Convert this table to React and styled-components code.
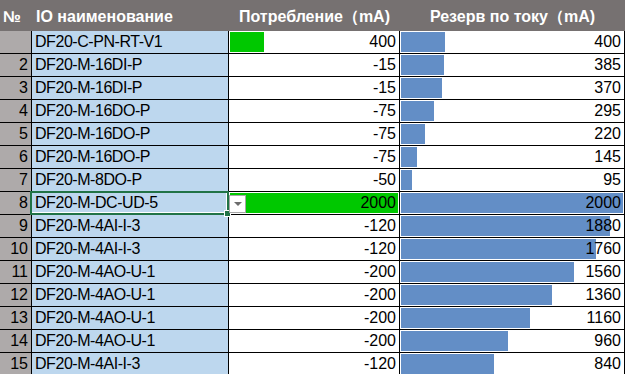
import styled, { createGlobalStyle } from "styled-components";

const GlobalStyle = createGlobalStyle`
  html, body {
    margin: 0;
    padding: 0;
    background: #fff;
    overflow: hidden;
  }
  body {
    font-family: "Liberation Sans Narrow", "Liberation Sans", Arial, sans-serif;
  }
`;

const rows = [
  { n: "", name: "DF20-C-PN-RT-V1", use: 400, res: 400 },
  { n: 2, name: "DF20-M-16DI-P", use: -15, res: 385 },
  { n: 3, name: "DF20-M-16DI-P", use: -15, res: 370 },
  { n: 4, name: "DF20-M-16DO-P", use: -75, res: 295 },
  { n: 5, name: "DF20-M-16DO-P", use: -75, res: 220 },
  { n: 6, name: "DF20-M-16DO-P", use: -75, res: 145 },
  { n: 7, name: "DF20-M-8DO-P", use: -50, res: 95 },
  { n: 8, name: "DF20-M-DC-UD-5", use: 2000, res: 2000, selected: true },
  { n: 9, name: "DF20-M-4AI-I-3", use: -120, res: 1880 },
  { n: 10, name: "DF20-M-4AI-I-3", use: -120, res: 1760 },
  { n: 11, name: "DF20-M-4AO-U-1", use: -200, res: 1560 },
  { n: 12, name: "DF20-M-4AO-U-1", use: -200, res: 1360 },
  { n: 13, name: "DF20-M-4AO-U-1", use: -200, res: 1160 },
  { n: 14, name: "DF20-M-4AO-U-1", use: -200, res: 960 },
  { n: 15, name: "DF20-M-4AI-I-3", use: -120, res: 840 },
];

const MAX = 2000;

const Sheet = styled.div`
  display: grid;
  grid-template-columns: 32px 197px 171px 225px;
  grid-template-rows: 31px;
  grid-auto-rows: 23px;
  width: 625px;
`;

const HeadCell = styled.div`
  background: #767171;
  color: #fff;
  font-weight: 700;
  font-size: 16px;
  line-height: 1;
  display: flex;
  align-items: flex-end;
  justify-content: ${(p) => (p.$center ? "center" : "flex-start")};
  padding: 0 0 6px ${(p) => p.$indent || "0"};
  white-space: nowrap;
  box-sizing: border-box;
`;

const Cell = styled.div`
  position: relative;
  box-sizing: border-box;
  border-right: 1px solid #000;
  border-bottom: 1px solid #000;
  background: ${(p) => p.$bg || "#fff"};
  color: #000;
  font-size: 16px;
  line-height: 1;
  letter-spacing: ${(p) => (p.$tight ? "-0.45px" : "0")};
  display: flex;
  align-items: flex-end;
  justify-content: ${(p) => (p.$right ? "flex-end" : "flex-start")};
  padding: 0 ${(p) => (p.$right ? "3px" : "0")} 3px ${(p) => (p.$right ? "0" : "3px")};
  white-space: nowrap;
`;

const Bar = styled.div`
  position: absolute;
  left: 1px;
  top: 1px;
  bottom: 1px;
  background: ${(p) => p.$color};
`;

const Value = styled.span`
  position: relative;
`;

const Selection = styled.div`
  position: absolute;
  left: -2px;
  top: -1px;
  right: -1px;
  bottom: -1px;
  border: 2px solid #217346;
  pointer-events: none;
  &::before {
    content: "";
    position: absolute;
    inset: 0;
    border-right: 1px solid #fff;
    border-bottom: 1px solid #fff;
  }
`;

const FillHandle = styled.div`
  position: absolute;
  right: -4px;
  bottom: -4px;
  width: 5px;
  height: 5px;
  background: #217346;
  border: 1px solid #fff;
  z-index: 2;
`;

const DropButton = styled.div`
  position: absolute;
  left: 0;
  top: 3px;
  width: 17px;
  height: 18px;
  box-sizing: border-box;
  background: #fff;
  border: 1px solid #a6a6a6;
  display: flex;
  align-items: center;
  justify-content: center;
  z-index: 2;
  &::after {
    content: "";
    border-left: 4px solid transparent;
    border-right: 4px solid transparent;
    border-top: 4px solid #6d6d6d;
  }
`;

export default function App() {
  return (
    <>
      <GlobalStyle />
      <Sheet>
        <HeadCell $indent="3px">№</HeadCell>
        <HeadCell $indent="4px">IO наименование</HeadCell>
        <HeadCell $center>Потребление（mA)</HeadCell>
        <HeadCell $center>Резерв по току（mA)</HeadCell>
        {rows.map((r, i) => (
          <Row key={i} {...r} />
        ))}
      </Sheet>
    </>
  );
}

function Row({ n, name, use, res, selected }) {
  const useW = use > 0 ? (use / MAX) * 168 : 0;
  const resW = res > 0 ? (res / MAX) * 222 : 0;
  return (
    <>
      <Cell $bg="#aeaaaa" $right>
        {n}
      </Cell>
      <Cell $bg="#bdd7ee" $tight>
        {name}
        {selected && (
          <Selection>
            <FillHandle />
          </Selection>
        )}
      </Cell>
      <Cell $right>
        {useW > 0 && <Bar $color="#00c800" style={{ width: useW }} />}
        {selected && <DropButton />}
        <Value>{use}</Value>
      </Cell>
      <Cell $right>
        {resW > 0 && <Bar $color="#638ec6" style={{ width: resW }} />}
        <Value>{res}</Value>
      </Cell>
    </>
  );
}
